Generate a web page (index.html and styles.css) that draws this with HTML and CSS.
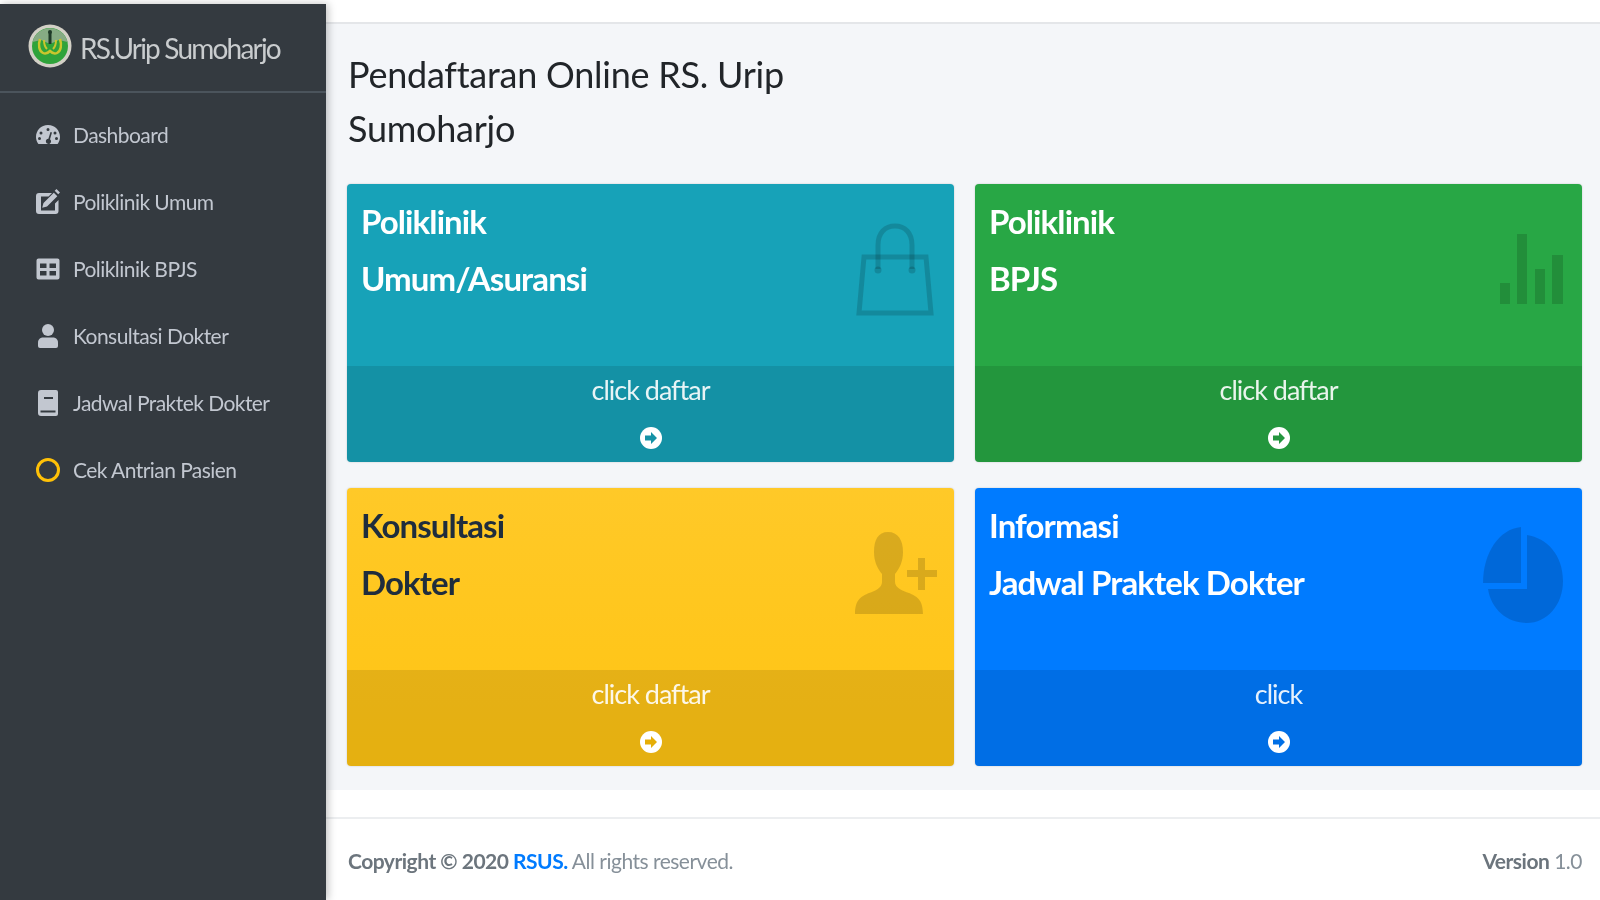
FILE: index.html

```html
<!DOCTYPE html>
<html lang="en">
<head>
    <meta charset="UTF-8">
    <title>Pendaftaran Online RS. Urip Sumoharjo</title>
    <link rel="stylesheet" href="styles.css">
</head>
<body>
    <aside class="sidebar">
        <div class="brand">
            <svg class="logo" viewBox="0 0 44 44">
                <circle cx="22" cy="22" r="21.500" fill="#d3d0c6"/>
                <circle cx="22" cy="22" r="18" fill="#2fa33a"/>
                <path d="M4.500 18A18 18 0 0 1 39.500 18L31 16L22 20L13 16Z" fill="#86ab84"/>
                <path fill="none" stroke="#c9c62d" stroke-width="2.500" d="M12 15c-2 6-1 12 3 14 3 1.500 5 0 7-2 2 2 4 3.500 7 2 4-2 5-8 3-14"/>
                <path fill="none" stroke="#c9c62d" stroke-width="2" d="M16 16c0 4 1 7 3 9M28 16c0 4-1 7-3 9"/>
                <rect x="20.500" y="8" width="3" height="12" fill="#1f3a28"/>
                <circle cx="22" cy="8" r="2" fill="#1f3a28"/>
            </svg>
            <span class="brand-text">RS.Urip Sumoharjo</span>
        </div>
        <nav class="menu">
            <a class="menu-item" href="#">
                <svg class="menu-icon" viewBox="0 0 26 26"><path fill-rule="evenodd" d="M13 3C6 3 1 8.500 1 15c0 2.500.8 4.800 2 6.500.3.400.7.500 1.100.500h17.800c.4 0 .8-.1 1.100-.5 1.200-1.700 2-4 2-6.500C25 8.500 20 3 13 3zM13 6a1.500 1.500 0 1 1 0 3 1.500 1.500 0 0 1 0-3zM6 9.500a1.500 1.500 0 1 1 0 3 1.500 1.500 0 0 1 0-3zM4.500 15a1.500 1.500 0 1 1 0 3 1.500 1.500 0 0 1 0-3zM21.500 15a1.500 1.500 0 1 1 0 3 1.500 1.500 0 0 1 0-3zM20 9.500a1.500 1.500 0 1 1 0 3 1.500 1.500 0 0 1 0-3zM15.500 10l1.500.5-2 6.700a2.600 2.600 0 1 1-1.600-.5z"/></svg>
                <span>Dashboard</span>
            </a>
            <a class="menu-item" href="#">
                <svg class="menu-icon" viewBox="0 0 26 26"><path d="M21.500 0l3.500 3.500-1.800 1.800-3.500-3.500zM18.800 3.700l3.500 3.500-10.300 10.300-4.800 1.300 1.300-4.800z"/><path d="M4 4h13l-3.500 3.500H6v14h14v-7l3.500-3.500V22a3 3 0 0 1-3 3H4a3 3 0 0 1-3-3V7a3 3 0 0 1 3-3z"/></svg>
                <span>Poliklinik Umum</span>
            </a>
            <a class="menu-item" href="#">
                <svg class="menu-icon" viewBox="0 0 26 26"><path fill-rule="evenodd" d="M3.500 2.500h19A2 2 0 0 1 24.500 4.500v17a2 2 0 0 1-2 2h-19a2 2 0 0 1-2-2v-17a2 2 0 0 1 2-2zM5 7.500v4.500h6.500V7.500zM14.500 7.500v4.500H21V7.500zM5 15v4.500h6.500V15zM14.500 15v4.500H21V15z"/></svg>
                <span>Poliklinik BPJS</span>
            </a>
            <a class="menu-item" href="#">
                <svg class="menu-icon" viewBox="0 0 26 26"><circle cx="13" cy="7" r="6"/><path d="M8 14.500h10c3 0 5 2.200 5 5V23a2 2 0 0 1-2 2H5a2 2 0 0 1-2-2v-3.500c0-2.800 2-5 5-5z"/></svg>
                <span>Konsultasi Dokter</span>
            </a>
            <a class="menu-item" href="#">
                <svg class="menu-icon" viewBox="0 0 26 26"><path fill-rule="evenodd" d="M6 0h15a2 2 0 0 1 2 2v22a2 2 0 0 1-2 2H6a3 3 0 0 1-3-3V3a3 3 0 0 1 3-3zM9 7v2h9V7zM5.500 20.500v2h15v-2z"/></svg>
                <span>Jadwal Praktek Dokter</span>
            </a>
            <a class="menu-item" href="#">
                <svg class="menu-icon" viewBox="0 0 26 26"><circle class="ring" cx="13" cy="13" r="10.500"/></svg>
                <span>Cek Antrian Pasien</span>
            </a>
        </nav>
    </aside>

    <div class="main">
        <header class="topbar"></header>
        <section class="content">
            <h1 class="page-title">Pendaftaran Online RS. Urip Sumoharjo</h1>
            <div class="cards">
                <div class="card card-info">
                    <div class="card-body">
                        <h3>Poliklinik</h3>
                        <h3>Umum/Asuransi</h3>
                        <svg class="card-icon icon-bag" viewBox="0 0 78 94"><path class="bag-line" d="M8 34h62l5 56H3z"/><path class="bag-line" d="M22 46V22C22 10 29 3 39 3s17 7 17 19v24"/><circle cx="22" cy="47" r="3.500"/><circle cx="56" cy="47" r="3.500"/></svg>
                    </div>
                    <a class="card-footer" href="#">
                        <span>click daftar</span>
                        <svg class="go-icon" viewBox="0 0 22 22"><circle cx="11" cy="11" r="11" fill="#fff"/><path class="go-arrow" d="M11 5l6 6-6 6v-3.500H5v-5h6z"/></svg>
                    </a>
                </div>
                <div class="card card-success">
                    <div class="card-body">
                        <h3>Poliklinik</h3>
                        <h3>BPJS</h3>
                        <svg class="card-icon icon-bars" viewBox="0 0 63 70"><rect x="0" y="49" width="10" height="21"/><rect x="17" y="0" width="10" height="70"/><rect x="35" y="35" width="10" height="35"/><rect x="52" y="21" width="11" height="49"/></svg>
                    </div>
                    <a class="card-footer" href="#">
                        <span>click daftar</span>
                        <svg class="go-icon" viewBox="0 0 22 22"><circle cx="11" cy="11" r="11" fill="#fff"/><path class="go-arrow" d="M11 5l6 6-6 6v-3.500H5v-5h6z"/></svg>
                    </a>
                </div>
                <div class="card card-warning">
                    <div class="card-body">
                        <h3>Konsultasi</h3>
                        <h3>Dokter</h3>
                        <svg class="card-icon icon-person" viewBox="0 0 82 82"><path d="M33 0c10 0 15 8 15 20 0 9-3 16-8 22v8c0 6 8 9 14 11 7 3 14 6 14 21H0c0-15 7-18 14-21 6-2 13-5 13-11v-8c-5-6-8-13-8-22C19 8 23 0 33 0z"/><path d="M63 26h7v12h12v7H70v13h-7V45H52v-7h11z"/></svg>
                    </div>
                    <a class="card-footer" href="#">
                        <span>click daftar</span>
                        <svg class="go-icon" viewBox="0 0 22 22"><circle cx="11" cy="11" r="11" fill="#fff"/><path class="go-arrow" d="M11 5l6 6-6 6v-3.500H5v-5h6z"/></svg>
                    </a>
                </div>
                <div class="card card-primary">
                    <div class="card-body">
                        <h3>Informasi</h3>
                        <h3>Jadwal Praktek Dokter</h3>
                        <svg class="card-icon icon-pie" viewBox="0 0 80 96"><path d="M38 0v56H0C0 26 16 2 38 0z"/><path d="M44 8c20 3 36 20 36 46 0 24-16 42-36 42C24 96 8 82 5 62h39z"/></svg>
                    </div>
                    <a class="card-footer" href="#">
                        <span>click</span>
                        <svg class="go-icon" viewBox="0 0 22 22"><circle cx="11" cy="11" r="11" fill="#fff"/><path class="go-arrow" d="M11 5l6 6-6 6v-3.500H5v-5h6z"/></svg>
                    </a>
                </div>
            </div>
        </section>
        <footer class="footer">
            <div class="copyright"><strong>Copyright &copy; 2020 <a href="#">RSUS.</a></strong> All rights reserved.</div>
            <div class="version"><strong>Version</strong> 1.0</div>
        </footer>
    </div>
</body>
</html>
```

FILE: styles.css

```css
* {
    box-sizing: border-box;
}
html {
    background: #fff;
}
body {
    margin: 0;
    height: 900px;
    overflow: hidden;
    display: flex;
    background: #fff;
    color: #212529;
    font-family: Lato, "Open Sans", sans-serif;
    /* the whole screen is soft in the reference */
    filter: blur(.6px);
}
a {
    text-decoration: none;
}

/* sidebar */
.sidebar {
    flex: 0 0 326px;
    margin-top: 4px;
    background: #343a40;
    box-shadow: 2px 0 8px rgba(0, 0, 0, .25);
    position: relative;
}
.brand {
    height: 89px;
    padding: 20px 0 0 28px;
    display: flex;
    align-items: flex-start;
    gap: 8px;
    border-bottom: 2px solid #4b545c;
}
.logo {
    width: 44px;
    height: 44px;
    flex: none;
}
.brand-text {
    color: #c9ccce;
    font-size: 28px;
    line-height: 48px;
    letter-spacing: -1.8px;
}
.menu {
    padding-top: 8px;
}
.menu-item {
    height: 67px;
    padding-left: 35px;
    display: flex;
    align-items: center;
    gap: 12px;
    color: #c2c7d0;
    font-size: 21px;
    letter-spacing: -.55px;
}
.menu-icon {
    width: 26px;
    height: 26px;
    flex: none;
    fill: #c2c7d0;
}
.ring {
    fill: none;
    stroke: #ffc107;
    stroke-width: 3;
}

/* main column */
.main {
    flex: 1;
    min-width: 0;
    display: flex;
    flex-direction: column;
}
.topbar {
    height: 24px;
    background: #fff;
    border-bottom: 2px solid #e4e6e9;
}
.content {
    height: 766px;
    padding: 23px 18px 0 21px;
    background: #f4f6f9;
}
.page-title {
    width: 480px;
    margin: 0 0 29px 1px;
    font-size: 36px;
    font-weight: 400;
    line-height: 54px;
    letter-spacing: -.25px;
}
.cards {
    display: grid;
    grid-template-columns: 1fr 1fr;
    gap: 26px 21px;
}
.card {
    height: 278px;
    border-radius: 4px;
    box-shadow: 0 0 2px rgba(0, 0, 0, .2);
    display: flex;
    flex-direction: column;
    overflow: hidden;
    color: #fff;
}
.card-info { background: #17a2b8; }
.card-success { background: #28a745; }
.card-warning { background: linear-gradient(#ffc928, #ffc412); color: #1f2d3d; }
.card-primary { background: #007bff; }
.card-body {
    flex: 1;
    padding: 9px 14px 0;
    position: relative;
}
.card-body h3 {
    margin: 0;
    font-size: 33px;
    font-weight: 700;
    line-height: 57px;
    letter-spacing: -.9px;
}
.card-icon {
    position: absolute;
    fill: rgba(0, 0, 0, .15);
}
.bag-line {
    fill: none;
    stroke: rgba(0, 0, 0, .15);
    stroke-width: 5;
}
.icon-bag { top: 39px; right: 20px; width: 78px; height: 94px; }
.icon-bars { top: 50px; right: 19px; width: 63px; height: 70px; }
.icon-person { top: 44px; right: 17px; width: 82px; height: 82px; }
.icon-pie { top: 39px; right: 19px; width: 80px; height: 96px; }
.card-footer {
    height: 96px;
    padding-top: 7px;
    background: rgba(0, 0, 0, .1);
    color: rgba(255, 255, 255, .9);
    font-size: 27px;
    line-height: 34px;
    letter-spacing: -1px;
    display: flex;
    flex-direction: column;
    align-items: center;
    gap: 20px;
}
.go-icon {
    width: 22px;
    height: 22px;
}
.card-info .go-arrow { fill: #1592a6; }
.card-success .go-arrow { fill: #24963e; }
.card-warning .go-arrow { fill: #e6ae06; }
.card-primary .go-arrow { fill: #006fe6; }

/* footer */
.footer {
    flex: 1;
    margin-top: 27px;
    padding: 1px 18px 0 22px;
    border-top: 2px solid #eceef0;
    display: flex;
    justify-content: space-between;
    align-items: center;
    color: #869099;
    font-size: 21px;
    letter-spacing: -.5px;
}
.copyright strong,
.version strong {
    color: #6c757d;
}
.footer a {
    color: #007bff;
}
```
